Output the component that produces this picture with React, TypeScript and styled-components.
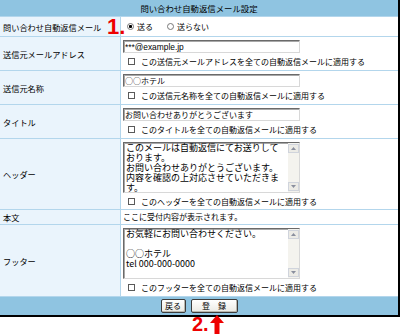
import React from "react";
import styled, { createGlobalStyle } from "styled-components";

const Global = createGlobalStyle`
  html, body { margin: 0; padding: 0; background: #fff; }
  body { font-family: "Noto Sans CJK JP", "Noto Sans", sans-serif; color: #000; }
`;

const Page = styled.div`
  position: relative;
  width: 400px;
  height: 335px;
  overflow: hidden;
`;

const Frame = styled.div`
  width: 400px;
  box-sizing: border-box;
  border-right: 2px solid #000;
  border-bottom: 2px solid #000;
  background: #b3d6ec;
  display: flex;
  flex-direction: column;
  gap: 1px;
`;

const Header = styled.div`
  height: 16px;
  background: #8fc4e1;
  display: flex;
  align-items: center;
  justify-content: center;
  font-size: 8.4px;
  line-height: 10px;
`;

const Row = styled.div<{ $h: number }>`
  height: ${(p) => p.$h}px;
  display: grid;
  grid-template-columns: 120px 1fr;
  gap: 1px;
`;

const Label = styled.div`
  background: #eaf4fc;
  display: flex;
  align-items: center;
  padding-left: 3px;
  font-size: 8.2px;
  line-height: 10px;
  white-space: nowrap;
`;

const Cell = styled.div<{ $center?: boolean }>`
  background: #fff;
  padding: ${(p) => (p.$center ? "0 2px" : "3px 2px 0")};
  display: flex;
  flex-direction: column;
  gap: 3px;
  justify-content: ${(p) => (p.$center ? "center" : "flex-start")};
  font-size: 8px;
  line-height: 10px;
`;

const TextInput = styled.input<{ $latin?: boolean }>`
  width: 177px;
  height: 13px;
  box-sizing: border-box;
  margin: 0;
  padding: 0 1px;
  border: 1px solid;
  border-color: #6a6a6a #d8d8d8 #d8d8d8 #6a6a6a;
  box-shadow: inset 1px 1px 0 #a8a8a8;
  font-family: ${(p) =>
    p.$latin ? `"Liberation Sans", sans-serif` : `"Noto Sans CJK JP", sans-serif`};
  font-size: ${(p) => (p.$latin ? "8.4px" : "8px")};
  color: #000;
  background: #fff;
  outline: none;
`;

const CheckLine = styled.label`
  display: flex;
  align-items: center;
  gap: 6px;
  padding-left: 5px;
  height: 11px;
  font-size: 8px;
  line-height: 11px;
  white-space: nowrap;
`;

const Check = styled.input.attrs({ type: "checkbox" })`
  appearance: none;
  margin: 0;
  width: 7px;
  height: 7px;
  box-sizing: border-box;
  border: 1px solid #5a5a5a;
  background: #fff;
`;

const RadioGroup = styled.div`
  display: flex;
  align-items: center;
  padding-left: 4px;
  gap: 14px;
`;

const RadioItem = styled.label`
  display: flex;
  align-items: center;
  gap: 3px;
  font-size: 8px;
  line-height: 10px;
`;

const Radio = styled.input.attrs({ type: "radio" })`
  appearance: none;
  margin: 0;
  width: 7px;
  height: 7px;
  box-sizing: border-box;
  border-radius: 50%;
  border: 1px solid #777;
  background: #fff;
  &:checked {
    background: radial-gradient(circle, #000 0 1.3px, #fff 1.8px);
  }
`;

const AreaBox = styled.div<{ $h: number }>`
  width: 177px;
  height: ${(p) => p.$h}px;
  box-sizing: border-box;
  border: 1px solid;
  border-color: #6a6a6a #d8d8d8 #d8d8d8 #6a6a6a;
  box-shadow: inset 1px 1px 0 #a8a8a8;
  display: flex;
  background: #fff;
  overflow: hidden;
`;

const Area = styled.textarea`
  flex: 1;
  min-width: 0;
  border: 0;
  margin: 0;
  padding: 0 0 0 2px;
  resize: none;
  overflow: hidden;
  font-family: "Noto Sans CJK JP", sans-serif;
  font-size: 9px;
  line-height: 10px;
  white-space: pre;
  background: transparent;
  color: #000;
  outline: none;
`;

const ScrollBar = styled.div`
  width: 11px;
  display: flex;
  flex-direction: column;
  justify-content: space-between;
  background: #f4f3ee;
  padding: 1px 0;
`;

const ScrollBtn = styled.div`
  height: 9px;
  box-sizing: border-box;
  border: 1px solid #d0d4dc;
  background: #ecebe6;
  display: flex;
  align-items: center;
  justify-content: center;
`;

const Footer = styled.div`
  height: 18px;
  background: #8fc4e1;
  display: flex;
  align-items: center;
  justify-content: center;
  gap: 5px;
`;

const Button = styled.button<{ $w: number }>`
  width: ${(p) => p.$w}px;
  height: 14px;
  box-sizing: border-box;
  margin: 0;
  padding: 0;
  border: 1px solid #3c3c3c;
  border-radius: 2px;
  background: linear-gradient(#ffffff, #ebeae4);
  box-shadow: inset -1px -1px 0 #b8b6ac;
  font-family: "Noto Sans CJK JP", sans-serif;
  font-size: 8px;
  line-height: 10px;
  color: #000;
`;

const Marker = styled.div`
  position: absolute;
  left: 107px;
  top: 15px;
  font-family: "Liberation Sans", Arial, sans-serif;
  font-weight: bold;
  font-size: 22px;
  line-height: 24px;
  color: #ee0000;
`;

const NoteRow = styled.div`
  display: flex;
  align-items: flex-start;
  gap: 1px;
  padding-left: 192px;
  margin-top: -2px;
  height: 19px;
`;

const Note = styled.span`
  margin-top: 1px;
  font-family: "Liberation Sans", Arial, sans-serif;
  font-weight: bold;
  font-size: 20px;
  line-height: 16px;
  color: #ee0000;
`;

const Arrow = () => (
  <svg width="14" height="19" viewBox="0 0 14 19">
    <path d="M7 0 L14 8 L9.5 8 L9.5 19 L4.5 19 L4.5 8 L0 8 Z" fill="#ee0000" />
  </svg>
);

const Tri = ({ up }: { up?: boolean }) => (
  <svg width="5" height="3" viewBox="0 0 5 3">
    <path d={up ? "M0 3 L2.5 0 L5 3 Z" : "M0 0 L2.5 3 L5 0 Z"} fill="#8a8f9e" />
  </svg>
);

const CheckRow = ({ text }: { text: string }) => (
  <CheckLine>
    <Check />
    <span>{text}</span>
  </CheckLine>
);

const TextArea = ({ value, h }: { value: string; h: number }) => (
  <AreaBox $h={h}>
    <Area defaultValue={value} readOnly />
    <ScrollBar>
      <ScrollBtn>
        <Tri up />
      </ScrollBtn>
      <ScrollBtn>
        <Tri />
      </ScrollBtn>
    </ScrollBar>
  </AreaBox>
);

export default function App() {
  return (
    <Page>
      <Global />
      <Frame>
        <Header>問い合わせ自動返信メール設定</Header>
        <Row $h={19}>
          <Label>問い合わせ自動返信メール</Label>
          <Cell $center>
            <RadioGroup>
              <RadioItem>
                <Radio name="send" defaultChecked />
                送る
              </RadioItem>
              <RadioItem>
                <Radio name="send" />
                送らない
              </RadioItem>
            </RadioGroup>
          </Cell>
        </Row>
        <Row $h={33}>
          <Label>送信元メールアドレス</Label>
          <Cell>
            <TextInput $latin defaultValue="***@example.jp" />
            <CheckRow text="この送信元メールアドレスを全ての自動返信メールに適用する" />
          </Cell>
        </Row>
        <Row $h={33}>
          <Label>送信元名称</Label>
          <Cell>
            <TextInput defaultValue="○○ホテル" />
            <CheckRow text="この送信元名称を全ての自動返信メールに適用する" />
          </Cell>
        </Row>
        <Row $h={33}>
          <Label>タイトル</Label>
          <Cell>
            <TextInput defaultValue="お問い合わせありがとうございます" />
            <CheckRow text="このタイトルを全ての自動返信メールに適用する" />
          </Cell>
        </Row>
        <Row $h={70}>
          <Label>ヘッダー</Label>
          <Cell>
            <TextArea
              h={51}
              value={"このメールは自動返信にてお送りして\nおります。\nお問い合わせありがとうございます。\n内容を確認の上対応させていただきま\nす。"}
            />
            <CheckRow text="このヘッダーを全ての自動返信メールに適用する" />
          </Cell>
        </Row>
        <Row $h={14}>
          <Label>本文</Label>
          <Cell $center>ここに受付内容が表示されます。</Cell>
        </Row>
        <Row $h={71}>
          <Label>フッター</Label>
          <Cell>
            <TextArea
              h={51}
              value={"お気軽にお問い合わせください。\n\n○○ホテル\ntel 000-000-0000"}
            />
            <CheckRow text="このフッターを全ての自動返信メールに適用する" />
          </Cell>
        </Row>
        <Footer>
          <Button $w={25}>戻る</Button>
          <Button $w={47}>登　録</Button>
        </Footer>
      </Frame>
      <Marker>1.</Marker>
      <NoteRow>
        <Note>2.</Note>
        <Arrow />
      </NoteRow>
    </Page>
  );
}
